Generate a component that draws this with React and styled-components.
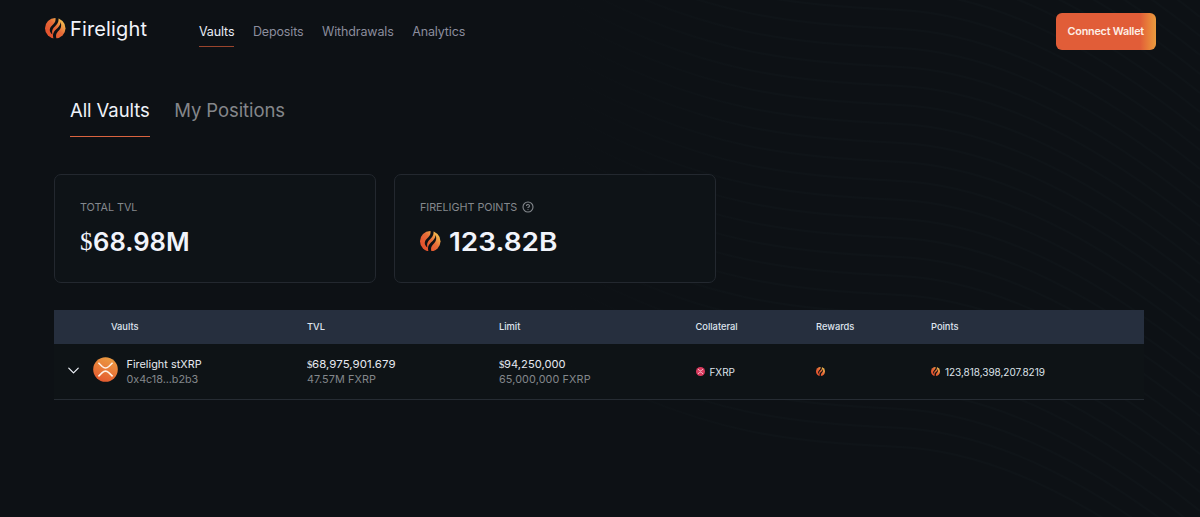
import React, { useState } from 'react'
import styled, { createGlobalStyle, css } from 'styled-components';
import { ChevronDown, CircleHelp } from 'lucide-react';

const GlobalStyle = createGlobalStyle`
  * {
    box-sizing: border-box;
  }
  body {
    margin: 0;
    background: #0d1115;
    color: #f1f4fb;
    font-family: Inter, "Liberation Sans", sans-serif;
  }
  button {
    font-family: inherit;
  }
`;

const Page = styled.div`
  position: relative;
  width: 1200px;
  height: 517px;
  overflow: hidden;
`;

const Waves = styled.svg`
  position: absolute;
  inset: 0;
  z-index: -1;
  stroke: url(#wave);
  stroke-width: 2;
  fill: none;
`;

const Header = styled.header`
  display: flex;
  align-items: flex-start;
  height: 62px;
  padding: 13px 44px 0 45px;
`;

const Logo = styled.a`
  display: flex;
  align-items: center;
  width: 154px;
  height: 31px;
  gap: 4.5px;
  font-size: 20px;
  letter-spacing: 0.15px;
`;

const Nav = styled.nav`
  display: flex;
  gap: 18.5px;
  flex: 1;
  padding-top: 8px;
`;

const NavLink = styled.a`
  height: 26px;
  padding-top: 1px;
  font-size: 12.5px;
  line-height: 20px;
  letter-spacing: -0.13px;
  color: ${(props) => (props.$active ? "#e9ecf5" : "#8b8d9d")};
  border-bottom: 1px solid ${(props) => (props.$active ? "#9a442c" : "transparent")};
`;

const ConnectButton = styled.button`
  width: 100.5px;
  height: 37px;
  padding: 0;
  border: 0;
  border-radius: 6px;
  color: #fdeee6;
  font-size: 10.8px;
  font-weight: 600;
  letter-spacing: -0.22px;
  background: linear-gradient(90deg, #e15d38 0%, #e15d38 84%, #e8813a 93%, #e99a3e 100%);
`;

const Tabs = styled.div`
  display: flex;
  gap: 24.5px;
  padding: 35px 0 0 70px;
`;

const Tab = styled.button`
  height: 40px;
  padding: 0 0 13px;
  border: 0;
  background: none;
  font-size: 18.5px;
  line-height: 26px;
  letter-spacing: -0.08px;
  color: ${(props) => (props.$active ? "#eef1f8" : "#84868a")};
  border-bottom: 1.5px solid ${(props) => (props.$active ? "#d9633f" : "transparent")};
`;

const Cards = styled.section`
  display: flex;
  gap: 18px;
  padding: 37px 0 0 54px;
`;

const Card = styled.div`
  width: 322px;
  height: 109px;
  padding: 24px 25px 0;
  border: 1px solid #23282f;
  border-radius: 7px;
  background: #0e1317;
`;

const CardLabel = styled.div`
  display: flex;
  align-items: center;
  gap: 5px;
  height: 16px;
  font-size: 10.8px;
  letter-spacing: -0.04px;
  color: #84888d;
`;

const CardValue = styled.div`
  display: flex;
  align-items: center;
  height: 30px;
  margin-top: 11px;
  gap: ${(props) => (props.$icon ? "8px" : "0")};
  font-size: 25px;
  font-weight: 600;

  span {
    padding-top: 2px;
  }
`;

const Wide = styled.span`
  display: inline-block;
  transform: scaleX(${(props) => props.$scale});
  transform-origin: left center;
`;

const Dollar = styled.span`
  font-family: "Liberation Serif", serif;
  font-weight: 400;
`;

const Table = styled.section`
  width: 1090px;
  margin: 27px 0 0 54px;
`;

const gridColumns = css`
  display: grid;
  grid-template-columns: 253px 192px 196.5px 120.5px 115px 1fr;
  align-items: center;
`;

const TableHead = styled.div`
  ${gridColumns}
  height: 34px;
  padding-bottom: 2px;
  background: #262f3e;
  font-size: 9.3px;
  font-weight: 500;
  color: #dfe4ee;
`;

const HeadCell = styled.div`
  padding-left: ${(props) => (props.$first ? "57px" : "0")};
`;

const TableRow = styled.div`
  ${gridColumns}
  height: 56px;
  background: #0e1316;
  border-bottom: 1px solid #262c33;
`;

const VaultCell = styled.div`
  display: flex;
  align-items: center;
  padding-left: 10px;

  .lucide {
    margin-top: -2px;
  }
`;

const TokenIcon = styled.svg`
  margin: -5px 8.5px 0 10px;
`;

const Lines = styled.div`
  font-size: 10.8px;
  line-height: 15px;
  letter-spacing: 0.05px;
  color: #e6e9f0;
`;

const Muted = styled.div`
  color: #83878b;
  letter-spacing: ${(props) => (props.$tight ? "-0.03px" : "0.12px")};
`;

const IconCell = styled.div`
  display: flex;
  align-items: center;
  gap: 5px;
  font-size: 10px;
  line-height: 12px;
  letter-spacing: -0.04px;
  color: #dfe3ea;
`;

const FlameIcon = ({ size, id }) => (
  <svg width={size} height={size} viewBox="0 0 24 24">
    <defs>
      <linearGradient id={id} x1="6" y1="18" x2="21" y2="4" gradientUnits="userSpaceOnUse">
        <stop offset="0" stopColor="#e4552f" />
        <stop offset="0.5" stopColor="#e66c38" />
        <stop offset="1" stopColor="#f3bd4e" />
      </linearGradient>
    </defs>
    <circle cx="12" cy="12" r="12" fill={`url(#${id})`} />
    <path
      fill="#0d1115"
      d="M12.200 -0.500L15.600 -0.500C16.600 4.200 14.600 7 11.800 9.600C9 12.200 7.600 14.600 8.600 19.200C4.800 16.400 4.600 12.400 8 9C11 6 13 4 12.200 -0.500Z"
    />
    <path
      fill="#0d1115"
      d="M18.200 4.600C19.800 9 18.800 12.200 16 15C13.400 17.600 12 20 13.600 24.500L10.200 24.500C8.400 20 9.600 16.800 12.800 13.600C15.600 10.800 18 8.800 18.200 4.600Z"
    />
  </svg>
)

const XrpIcon = () => (
  <TokenIcon width="25" height="25" viewBox="0 0 25 25">
    <defs>
      <linearGradient id="xrp" x1="7" y1="25" x2="17" y2="0" gradientUnits="userSpaceOnUse">
        <stop offset="0" stopColor="#e4582f" />
        <stop offset="1" stopColor="#eb9c42" />
      </linearGradient>
    </defs>
    <circle cx="12.500" cy="12.500" r="12.300" fill="url(#xrp)" />
    <g fill="none" stroke="#fdf1e6" strokeWidth="1.600">
      <path d="M5.400 5.800L9.200 9.500Q12.500 12.500 15.800 9.500L19.600 5.800" />
      <path d="M5.400 19.400L9.200 15.700Q12.500 12.700 15.800 15.700L19.600 19.400" />
    </g>
  </TokenIcon>
)

const FxrpIcon = () => (
  <svg width="9" height="9" viewBox="0 0 9 9">
    <circle cx="4.500" cy="4.500" r="4.500" fill="#d93a5e" />
    <g fill="none" stroke="#f7cdd7" strokeWidth="0.900">
      <path d="M2 2.100L3.400 3.400Q4.500 4.400 5.600 3.400L7 2.100" />
      <path d="M2 6.900L3.400 5.600Q4.500 4.600 5.600 5.600L7 6.900" />
    </g>
  </svg>
)

const links = ["Vaults", "Deposits", "Withdrawals", "Analytics"]
const tabs = ["All Vaults", "My Positions"]
const columns = ["Vaults", "TVL", "Limit", "Collateral", "Rewards", "Points"]
const waves = Array.from({ length: 34 }, (_, i) => i * 19 - 230)

const App = () => {
  const [tab, setTab] = useState("All Vaults")

  return (
    <Page>
      <GlobalStyle />
      <Waves width="1200" height="517">
        <defs>
          <linearGradient id="wave" x1="560" y1="0" x2="1200" y2="0" gradientUnits="userSpaceOnUse">
            <stop offset="0" stopColor="#0d1115" />
            <stop offset="0.3" stopColor="#0f1418" />
            <stop offset="1" stopColor="#0f1418" />
          </linearGradient>
        </defs>
        {waves.map(y => (
          <path key={y} d={`M560 ${y - 40}C700 ${y + 40} 800 ${y + 45} 900 ${y + 50}S1100 ${y + 110} 1200 ${y + 190}`} />
        ))}
      </Waves>

      <Header>
        <Logo>
          <FlameIcon size={20.5} id="flame-logo" />
          <span>Firelight</span>
        </Logo>
        <Nav>
          {links.map(link => <NavLink key={link} $active={link === "Vaults"}>{link}</NavLink>)}
        </Nav>
        <ConnectButton>Connect Wallet</ConnectButton>
      </Header>

      <Tabs>
        {tabs.map(item => (
          <Tab key={item} $active={item === tab} onClick={() => setTab(item)}>{item}</Tab>
        ))}
      </Tabs>

      <Cards>
        <Card>
          <CardLabel>TOTAL TVL</CardLabel>
          <CardValue><Dollar>$</Dollar><Wide $scale={1.025}>68.98M</Wide></CardValue>
        </Card>
        <Card>
          <CardLabel>FIRELIGHT POINTS <CircleHelp size={12} strokeWidth={2.2} /></CardLabel>
          <CardValue $icon>
            <FlameIcon size={20.5} id="flame-card" />
            <Wide $scale={1.12}>123.82B</Wide>
          </CardValue>
        </Card>
      </Cards>

      <Table>
        <TableHead>
          {columns.map((name, i) => <HeadCell key={name} $first={i === 0}>{name}</HeadCell>)}
        </TableHead>
        <TableRow>
          <VaultCell>
            <ChevronDown className="lucide" size={19} strokeWidth={1.5} />
            <XrpIcon />
            <Lines>
              <div>Firelight stXRP</div>
              <Muted $tight>0x4c18...b2b3</Muted>
            </Lines>
          </VaultCell>
          <Lines>
            <div><Dollar>$</Dollar><Wide $scale={1.06}>68,975,901.679</Wide></div>
            <Muted>47.57M FXRP</Muted>
          </Lines>
          <Lines>
            <div><Dollar>$</Dollar><Wide $scale={1.03}>94,250,000</Wide></div>
            <Muted>65,000,000 FXRP</Muted>
          </Lines>
          <IconCell><FxrpIcon /><span>FXRP</span></IconCell>
          <IconCell><FlameIcon size={9} id="flame-reward" /></IconCell>
          <IconCell><FlameIcon size={9} id="flame-points" /><span>123,818,398,207.8219</span></IconCell>
        </TableRow>
      </Table>
    </Page>
  )
}

export default App;
